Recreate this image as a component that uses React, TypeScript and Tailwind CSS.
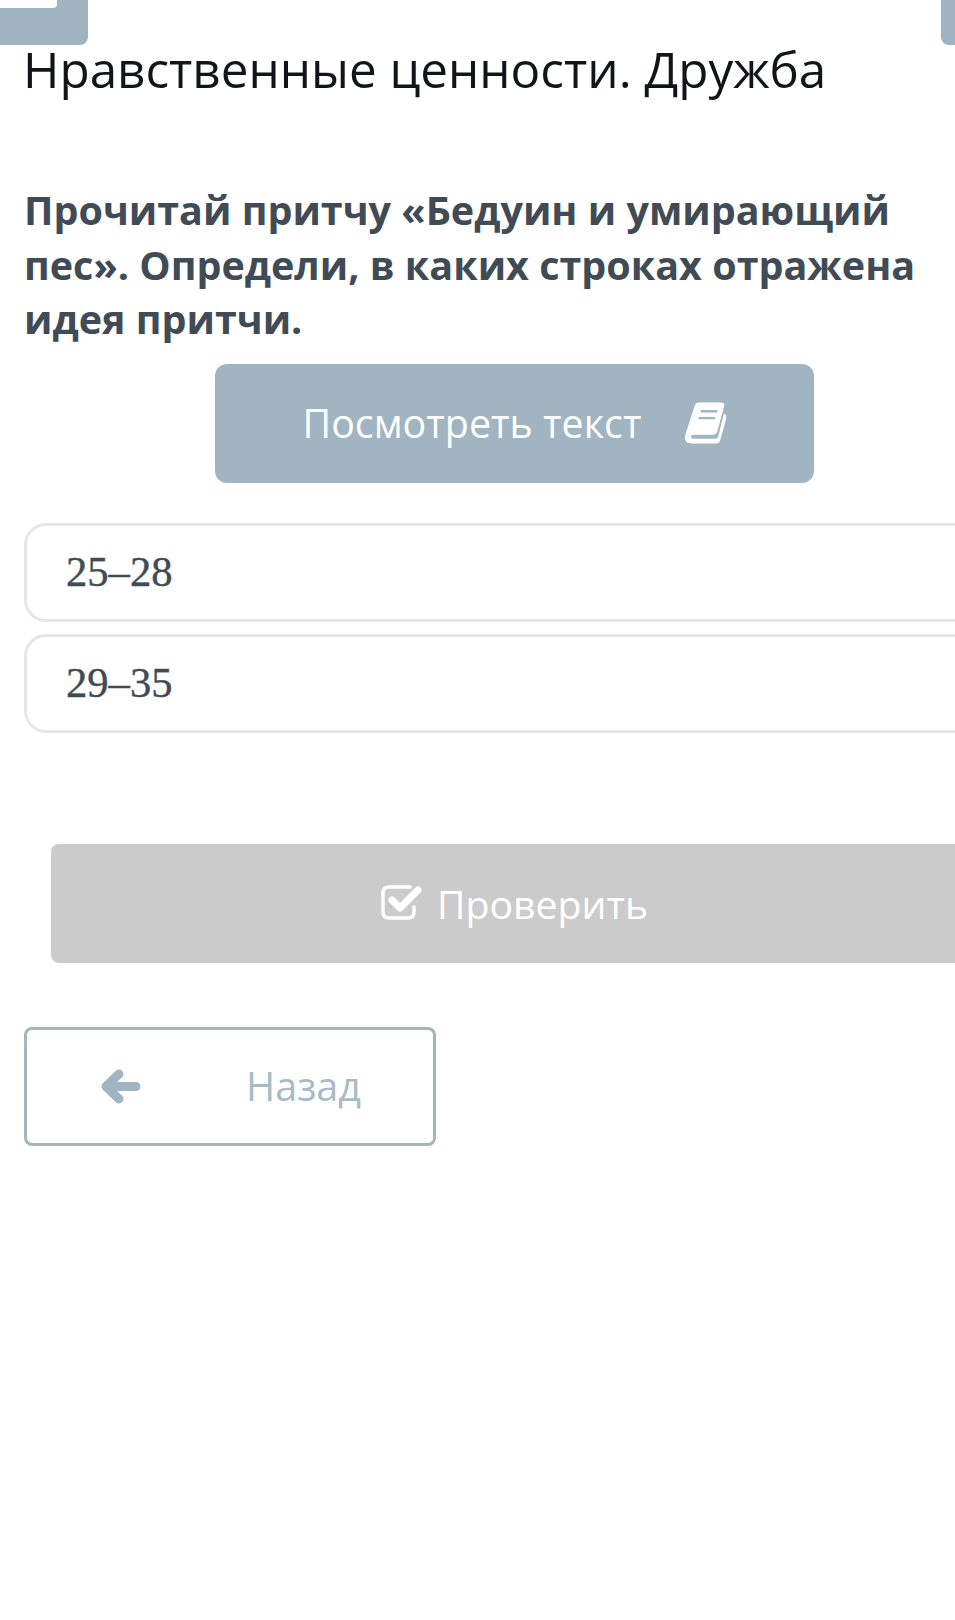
const openSans = "font-['Open_Sans',sans-serif]";

function BookIcon() {
  return (
    <svg viewBox="0 0 44 42" className="h-[42px] w-[43px] shrink-0">
      <path
        fill="#ffffff"
        d="M11 3 Q12 0 15 0 H38 Q42 0 41 4 L34 30 Q33 33 30 33 H10 Q7 33 7 35 Q7 37 10 37 H32 Q34 37 35 35 L41 11 Q44 13 43 17 L37 39 Q36 42 33 42 H8 Q0 42 1 34 Z"
      />
      <path stroke="#a0b4c1" strokeWidth="2.5" d="M17 9 H34 M15 16 H32" />
    </svg>
  );
}

function CheckIcon() {
  return (
    <svg viewBox="0 0 42 36" fill="none" stroke="#ffffff" className="mr-[14px] mb-[3px] h-[36px] w-[42px] shrink-0">
      <path strokeWidth="3.5" strokeLinecap="round" d="M33 23 V28 Q33 34 27 34 H8 Q2 34 2 28 V9 Q2 3 8 3 H29" />
      <path strokeWidth="7" strokeLinecap="round" strokeLinejoin="round" d="M11 16 L19 24 L37 6" />
    </svg>
  );
}

function ArrowIcon() {
  return (
    <svg viewBox="0 0 41 35" fill="none" stroke="#a0b4c1" className="h-[35px] w-[41px] shrink-0">
      <path strokeWidth="9" strokeLinecap="round" strokeLinejoin="round" d="M19 5 L6 17.5 L19 30 M8 17.5 H36" />
    </svg>
  );
}

export default function App() {
  return (
    <div className={`h-[1620px] w-[955px] overflow-hidden bg-white ${openSans}`}>
      {/* Top bar, cut off by the edge of the screen */}
      <div className="flex h-[45px] justify-between">
        <div className="h-[45px] w-[88px] rounded-br-lg bg-[#a0b4c1]">
          <div className="h-[8px] w-[57px] rounded-br-sm bg-white" />
        </div>
        <div className="h-[45px] w-[14px] rounded-bl-lg bg-[#a0b4c1]" />
      </div>

      <div className="pl-6">
        <h1 className="mt-[-9px] ml-[-1px] text-[49.4px] leading-[66px] font-normal text-[#111418]">
          Нравственные ценности. Дружба
        </h1>

        <p className="mt-[81px] w-[925px] text-[39.5px] leading-[54.5px] font-bold text-[#414b56]">
          Прочитай притчу «Бедуин и умирающий пес». Определи, в каких строках отражена идея притчи.
        </p>

        {/* View text */}
        <button className="mt-[17px] ml-[191px] flex h-[119px] w-[599px] items-center justify-center gap-[42px] rounded-xl bg-[#a0b4c1] text-[39.4px] text-white">
          <span className="mt-[2px]">Посмотреть текст</span>
          <BookIcon />
        </button>

        {/* Answers */}
        <div className="mt-10 flex w-[1000px] flex-col gap-[12px] font-['Liberation_Serif',serif] text-[42.6px] text-[#414b56] [-webkit-text-stroke:0.4px_#414b56]">
          <div className="flex h-[99px] items-center rounded-[22px] border-[3px] border-[#e4e6e7] pl-[39px]">25–28</div>
          <div className="flex h-[99px] items-center rounded-[22px] border-[3px] border-[#e4e6e7] pl-[39px]">29–35</div>
        </div>

        {/* Check */}
        <button className="mt-[111px] ml-[27px] flex h-[119px] w-[1000px] items-center rounded-l-lg bg-[#cbcbcb] pl-[330px] text-[39.2px] text-white">
          <CheckIcon />
          <span className="mt-[2px]">Проверить</span>
        </button>

        {/* Back */}
        <button className="mt-[64px] flex h-[119px] w-[412px] items-center rounded-lg border-[3px] border-[#a4b5be] bg-white pl-[73px] text-[39.6px] text-[#a9bac5]">
          <ArrowIcon />
          <span className="mt-[2px] ml-[105px]">Назад</span>
        </button>
      </div>
    </div>
  );
}
